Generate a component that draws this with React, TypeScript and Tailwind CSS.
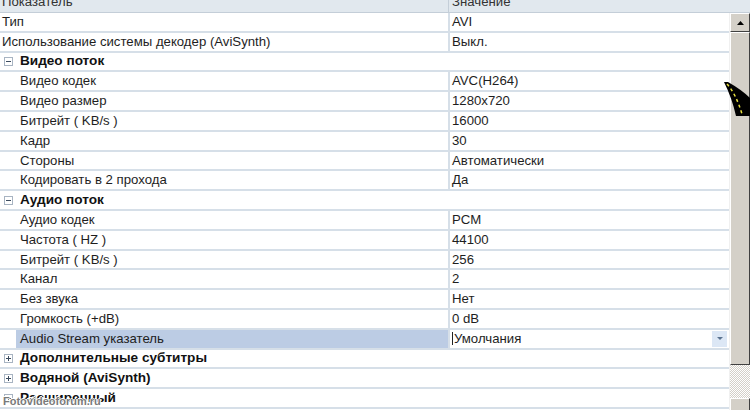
type Row =
  | { kind: 'prop'; name: string; value: string; indent?: boolean; selected?: boolean }
  | { kind: 'group'; name: string; open: boolean }

const rows: Row[] = [
  { kind: 'prop', name: 'Тип', value: 'AVI' },
  { kind: 'prop', name: 'Использование системы декодер (AviSynth)', value: 'Выкл.' },
  { kind: 'group', name: 'Видео поток', open: true },
  { kind: 'prop', indent: true, name: 'Видео кодек', value: 'AVC(H264)' },
  { kind: 'prop', indent: true, name: 'Видео размер', value: '1280x720' },
  { kind: 'prop', indent: true, name: 'Битрейт ( KB/s )', value: '16000' },
  { kind: 'prop', indent: true, name: 'Кадр', value: '30' },
  { kind: 'prop', indent: true, name: 'Стороны', value: 'Автоматически' },
  { kind: 'prop', indent: true, name: 'Кодировать в 2 прохода', value: 'Да' },
  { kind: 'group', name: 'Аудио поток', open: true },
  { kind: 'prop', indent: true, name: 'Аудио кодек', value: 'PCM' },
  { kind: 'prop', indent: true, name: 'Частота ( HZ )', value: '44100' },
  { kind: 'prop', indent: true, name: 'Битрейт ( KB/s )', value: '256' },
  { kind: 'prop', indent: true, name: 'Канал', value: '2' },
  { kind: 'prop', indent: true, name: 'Без звука', value: 'Нет' },
  { kind: 'prop', indent: true, name: 'Громкость (+dB)', value: '0 dB' },
  { kind: 'prop', indent: true, name: 'Audio Stream указатель', value: 'Умолчания', selected: true },
  { kind: 'group', name: 'Дополнительные субтитры', open: false },
  { kind: 'group', name: 'Водяной (AviSynth)', open: false },
  { kind: 'group', name: 'Расширенный', open: false },
]

function ToggleBox({ open }: { open: boolean }) {
  return (
    <div className="w-[9px] h-[9px] border border-[#a8b4c2] bg-white relative shrink-0">
      <div className="absolute left-[1px] right-[1px] top-[3px] h-px bg-[#3b4b5e]"></div>
      {!open && <div className="absolute top-[1px] bottom-[1px] left-[3px] w-px bg-[#3b4b5e]"></div>}
    </div>
  )
}

function PropRow({ row }: { row: Row }) {
  if (row.kind === 'group') {
    return (
      <div className="h-[19.8px] flex items-center border-b-2 border-[#d6dfe8] bg-white">
        <div className="w-[16px] flex justify-center pl-[1px]">
          <ToggleBox open={row.open} />
        </div>
        <span className="pl-[4px] font-bold text-[13.6px] text-[#111]">{row.name}</span>
      </div>
    )
  }
  return (
    <div className="h-[19.8px] flex border-b-2 border-[#d6dfe8] bg-white">
      {row.indent && <div className="w-[16px] shrink-0"></div>}
      <div
        className={`flex-1 flex items-center border-r-2 border-[#d6dfe8] ${row.indent ? 'pl-[4px]' : 'pl-[2px]'} ${
          row.selected ? 'bg-[#bccce4]' : ''
        }`}
      >
        {row.name}
      </div>
      <div className="w-[279px] shrink-0 flex items-center pl-[2px] relative">
        {row.selected && <span className="w-px h-[13px] bg-[#222] mr-[1px]"></span>}
        {row.value}
        {row.selected && (
          <div className="absolute right-[2px] top-[1px] bottom-[1px] w-[15px] bg-[#dce7f5] flex items-center justify-center">
            <svg width="6" height="4" viewBox="0 0 6 4">
              <path d="M0 0 L6 0 L3 3 Z" fill="#5a7390" />
            </svg>
          </div>
        )}
      </div>
    </div>
  )
}

export default function App() {
  return (
    <div
      className="w-[750px] h-[410px] overflow-hidden bg-white text-[13.2px] text-[#1e1e1e] relative"
      style={{ fontFamily: '"Liberation Sans", Arial, sans-serif' }}
    >
      {/* header, partly scrolled off */}
      <div className="h-[13px] flex bg-[#e1e8ee] border-b border-[#c4ced8] overflow-hidden">
        <div className="w-[449px] border-r border-[#c4ced8] pl-[2px] leading-[13px] -mt-[5px] text-[#333]">Показатель</div>
        <div className="flex-1 pl-[3px] leading-[13px] -mt-[5px] text-[#333]">Значение</div>
      </div>

      <div className="flex">
        <div className="w-[729px] shrink-0">
          {rows.map((r, i) => (
            <PropRow key={i} row={r} />
          ))}
        </div>

        {/* scrollbar */}
        <div className="flex-1 flex flex-col bg-[#d4d0c8] border-l border-[#f0f0f0]">
          <div className="h-[19px] border border-t-white border-l-white border-r-[#404040] border-b-[#404040] flex items-center justify-center">
            <svg width="7" height="4" viewBox="0 0 7 4">
              <path d="M0 4 L7 4 L3.5 0 Z" fill="#000" />
            </svg>
          </div>
          <div className="h-[333px] border border-t-white border-l-white border-r-[#404040] border-b-[#404040] bg-[#d4d0c8]"></div>
          <div className="h-[33px] bg-[repeating-conic-gradient(#ffffff_0_25%,#d4d0c8_0_50%)] bg-[length:2px_2px]"></div>
          <div className="h-[19px] border border-t-white border-l-white border-r-[#404040] border-b-[#404040]"></div>
        </div>
      </div>

      {/* road-like cursor overlay */}
      <svg className="absolute left-[722px] top-[80px]" width="28" height="38" viewBox="0 0 28 38">
        <path d="M2 2 L6 2 Q20 10 28 18 L28 36 L14 36 Q10 18 2 2 Z" fill="#000" />
        <path d="M5 4 Q14 14 20 34" stroke="#e8e040" strokeWidth="1.5" strokeDasharray="3 3" fill="none" />
      </svg>

      {/* watermark */}
      <div
        className="absolute left-[3px] top-[393px] text-[11px] font-bold text-[#7a7a7a]"
        style={{ textShadow: '1px 0 #fff, -1px 0 #fff, 0 1px #fff, 0 -1px #fff' }}
      >
        Fotovideoforum.ru
      </div>
    </div>
  )
}
